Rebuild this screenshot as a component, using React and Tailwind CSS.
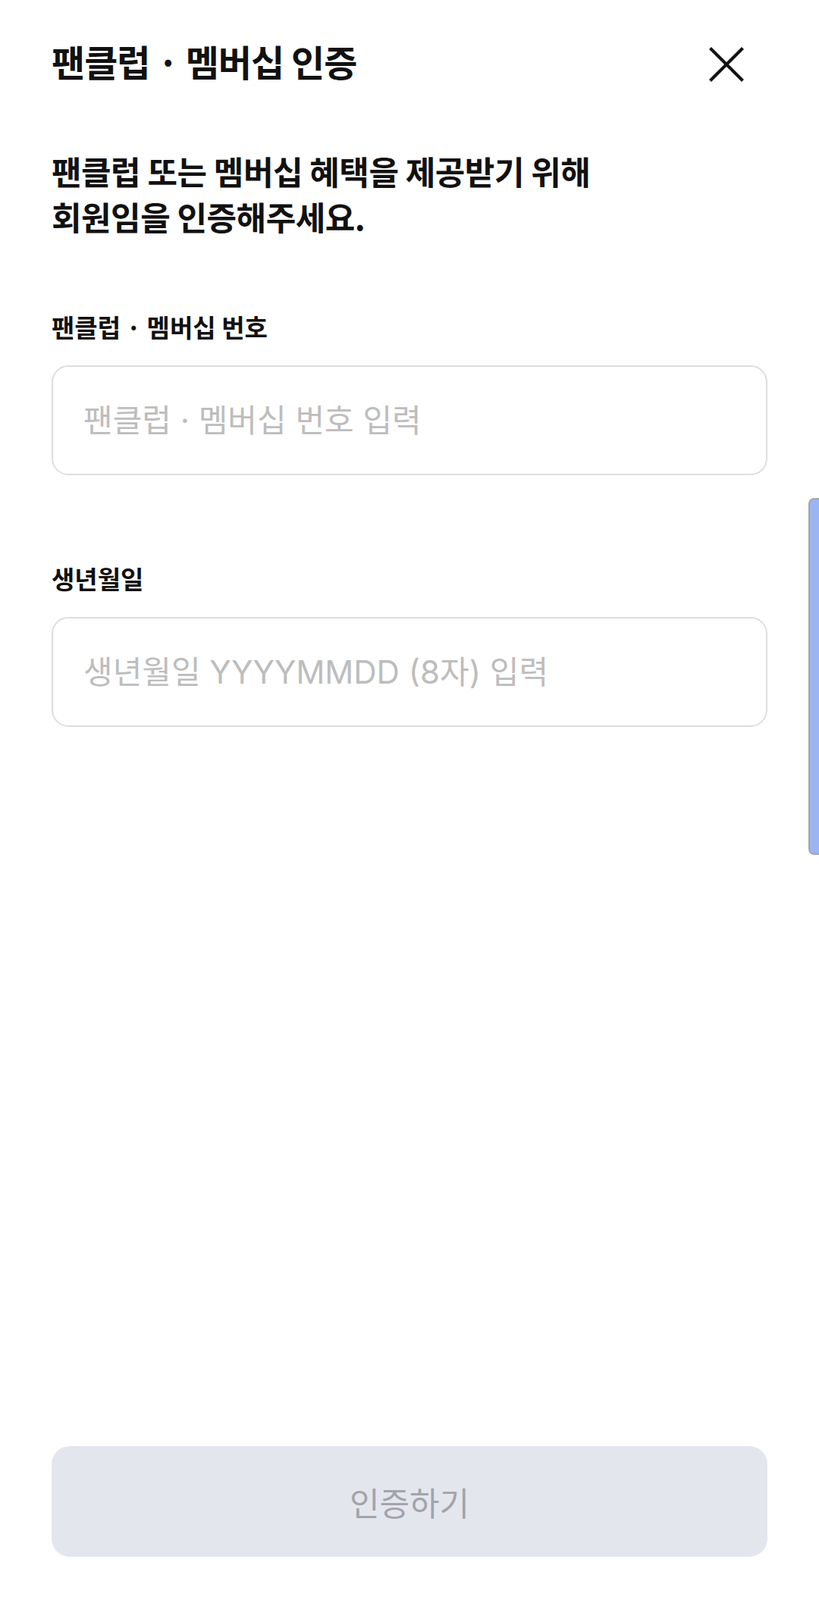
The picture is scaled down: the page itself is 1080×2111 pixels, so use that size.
import React from "react";

const FONT = { fontFamily: '"Noto Sans CJK KR", "Noto Sans", sans-serif' };
const INPUT_FONT = { fontFamily: 'Inter, "Noto Sans CJK KR", sans-serif' };

function CloseIcon() {
  return (
    <svg width="60" height="60" viewBox="0 0 60 60" fill="none" className="mt-[10px]">
      <path d="M8.5 8.5 L51.5 51.5 M51.5 8.5 L8.5 51.5" stroke="#111111" strokeWidth="4.2" strokeLinecap="butt" />
    </svg>
  );
}

function Field({ label, placeholder, top }) {
  return (
    <div className={top}>
      <div className="text-[33px] leading-[40px] font-bold text-[#111111]">{label}</div>
      <div className="mt-[31px] h-[145px] rounded-[22px] border-2 border-[#dedede] bg-white flex items-center">
        <input
          type="text"
          placeholder={placeholder}
          className="w-full h-full bg-transparent pl-[40px] pr-[30px] text-[42px] text-[#111111] placeholder:text-[#bdbdbd] outline-none"
          style={INPUT_FONT}
        />
      </div>
    </div>
  );
}

export default function App() {
  return (
    <div className="relative w-[1080px] h-[2111px] bg-white flex flex-col overflow-hidden" style={FONT}>
      <div className="h-[160px] pl-[68px] pr-[92px] flex items-center justify-between">
        <h1 className="text-[48px] font-bold tracking-[-1px] text-[#111111] leading-[60px]">팬클럽 · 멤버십 인증</h1>
        <CloseIcon />
      </div>

      <div className="px-[68px] pt-[35px]">
        <p className="text-[43px] leading-[60px] font-bold text-[#111111] tracking-[-0.5px]">
          팬클럽 또는 멤버십 혜택을 제공받기 위해
          <br />
          회원임을 인증해주세요.
        </p>

        <Field label="팬클럽 · 멤버십 번호" placeholder="팬클럽 · 멤버십 번호 입력" top="mt-[96px]" />
        <Field label="생년월일" placeholder="생년월일 YYYYMMDD (8자) 입력" top="mt-[116px]" />
      </div>

      <div className="flex-1" />

      <div className="px-[68px] pb-[57px]">
        <button
          type="button"
          className="w-full h-[146px] rounded-[24px] bg-[#e4e6ee] text-[43px] text-[#a3a4aa] flex items-center justify-center"
          style={FONT}
        >
          인증하기
        </button>
      </div>

      <div className="absolute right-0 top-[657px] w-[14px] h-[471px] rounded-l-[8px] border-2 border-r-0 border-[#a6a6a6] bg-[#9ab4f4]" />
    </div>
  );
}
